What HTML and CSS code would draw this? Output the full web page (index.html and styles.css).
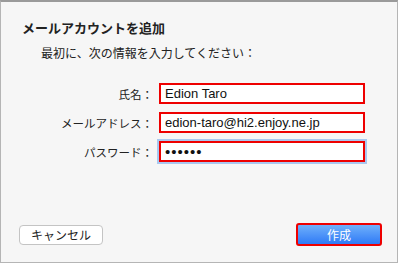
FILE: index.html
```html
<!DOCTYPE html>
<html lang="ja">
<head>
    <meta charset="UTF-8">
    <title>メールアカウントを追加</title>
    <link rel="stylesheet" href="styles.css">
</head>
<body>
    <div class="sheet">
        <h1>メールアカウントを追加</h1>
        <p class="intro">最初に、次の情報を入力してください：</p>

        <div class="form">
            <label for="name">氏名：</label>
            <div class="field"><input id="name" type="text" value="Edion Taro"></div>

            <label for="mail">メールアドレス：</label>
            <div class="field"><input id="mail" type="text" value="edion-taro@hi2.enjoy.ne.jp"></div>

            <label for="pass">パスワード：</label>
            <div class="field focus"><input id="pass" type="password" value="secret"></div>
        </div>

        <div class="actions">
            <button class="cancel">キャンセル</button>
            <button class="create">作成</button>
        </div>
    </div>
</body>
</html>
```

FILE: styles.css
```css
body {
    margin: 0;
    padding: 0;
    background-color: #ffffff;
    font-family: "Noto Sans CJK JP", "Liberation Sans", sans-serif;
    color: #222;
}
.sheet {
    box-sizing: border-box;
    width: 398px;
    height: 263px;
    background-color: #f6f6f6;
    border-top: 2px solid #9a9a9a;
    border-left: 1px solid #b5b5b5;
    border-right: 1px solid #b5b5b5;
    border-bottom: 1px solid #b5b5b5;
    display: flex;
    flex-direction: column;
}
h1 {
    margin: 17px 0 0 21px;
    font-size: 13px;
    font-weight: bold;
    line-height: 17px;
}
.intro {
    margin: 9px 0 0 40px;
    font-size: 12px;
    line-height: 16px;
}
.form {
    display: grid;
    grid-template-columns: 152px 206px;
    column-gap: 6px;
    row-gap: 8px;
    margin-top: 22px;
    align-items: center;
}
label {
    text-align: right;
    font-size: 11.5px;
    line-height: 16px;
    padding-top: 1px;
}
.field {
    box-sizing: border-box;
    height: 21px;
    border: 2px solid #ee0000;
    background-color: #ffffff;
    display: flex;
    align-items: center;
}
.field.focus {
    box-shadow: 0 0 0 2px #a9c8f0;
}
input {
    box-sizing: border-box;
    width: 100%;
    height: 17px;
    border: none;
    outline: none;
    padding: 0 0 0 4px;
    margin: 0;
    background: transparent;
    font-family: "Liberation Sans", sans-serif;
    font-size: 13px;
    line-height: 17px;
    color: #111;
}
input[type=password] {
    font-size: 15px;
    letter-spacing: 1px;
}
.actions {
    margin-top: auto;
    margin-bottom: 16px;
    padding: 0 15px 0 18px;
    display: flex;
    justify-content: space-between;
    align-items: center;
}
button {
    font-family: "Noto Sans CJK JP", sans-serif;
    font-size: 12px;
    cursor: pointer;
}
.cancel {
    width: 84px;
    height: 20px;
    padding: 0;
    background-color: #ffffff;
    border: 1px solid #c4c4c4;
    border-radius: 4px;
    color: #222;
}
.create {
    width: 86px;
    height: 23px;
    padding: 0;
    border: 2px solid #ee0000;
    border-radius: 3px;
    color: #ffffff;
    background: linear-gradient(#6fb0fb, #2f7af6);
}
```
